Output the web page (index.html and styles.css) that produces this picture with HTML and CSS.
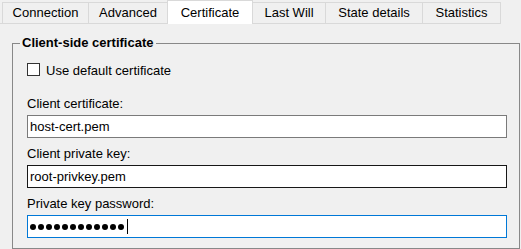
FILE: index.html
```html
<!DOCTYPE html>
<html lang="en">
<head>
    <meta charset="UTF-8">
    <title>Certificate settings</title>
    <link rel="stylesheet" href="styles.css">
</head>
<body>

    <div class="tabs">
        <div class="tab tab-connection">Connection</div>
        <div class="tab tab-advanced">Advanced</div>
        <div class="tab tab-certificate active">Certificate</div>
        <div class="tab tab-lastwill">Last Will</div>
        <div class="tab tab-state">State details</div>
        <div class="tab tab-stats">Statistics</div>
    </div>

    <fieldset class="group">
        <legend>Client-side certificate</legend>

        <label class="check">
            <span class="check-box"></span>
            <span>Use default certificate</span>
        </label>

        <div class="field">
            <div class="field-label">Client certificate:</div>
            <div class="input">host-cert.pem</div>
        </div>

        <div class="field">
            <div class="field-label">Client private key:</div>
            <div class="input hover">root-privkey.pem</div>
        </div>

        <div class="field">
            <div class="field-label">Private key password:</div>
            <div class="input focus">
                <span class="dot"></span><span class="dot"></span><span class="dot"></span><span class="dot"></span><span class="dot"></span><span class="dot"></span><span class="dot"></span><span class="dot"></span><span class="dot"></span><span class="dot"></span><span class="dot"></span><span class="dot"></span><span class="caret"></span>
            </div>
        </div>
    </fieldset>

</body>
</html>
```

FILE: styles.css
```css
body, html {
    margin: 0;
    padding: 0;
    height: 100%;
    width: 100%;
    font-family: "Liberation Sans", Arial, sans-serif;
    font-size: 13px;
    background-color: #f0f0f0;
    color: #000;
    overflow: hidden;
}
.tabs {
    display: flex;
    align-items: flex-start;
    width: max-content;
    height: 24px;
    box-sizing: border-box;
    padding-left: 2px;
    border-bottom: 1px solid #d9d9d9;
}
.tab {
    margin-top: 2px;
    margin-left: -1px;
    height: 21px;
    box-sizing: border-box;
    line-height: 20px;
    text-align: center;
    background-color: #f0f0f0;
    border: 1px solid #d9d9d9;
    border-bottom: none;
}
.tab:first-child {
    margin-left: 0;
}
.tab.active {
    margin-top: 0;
    height: 24px;
    padding-top: 1px;
    line-height: 21px;
    background-color: #fff;
    position: relative;
}
.tab-connection { width: 87px; }
.tab-advanced { width: 80px; }
.tab-certificate { width: 86px; }
.tab-lastwill { width: 74px; }
.tab-state { width: 98px; }
.tab-stats { width: 79px; }

.group {
    margin: 12px 1px 0 12px;
    padding: 0 12px 10px 14px;
    border: 1px solid #888;
    min-width: 0;
}
.group legend {
    margin-left: -7px;
    padding: 0 2px;
    font-weight: bold;
    line-height: 14px;
}
.check {
    display: flex;
    align-items: flex-start;
    gap: 6px;
    margin-top: 13px;
    line-height: 15px;
}
.check-box {
    width: 13px;
    height: 13px;
    box-sizing: border-box;
    border: 1px solid #333;
    background-color: #fff;
}
.field {
    margin-top: 8px;
}
.check + .field {
    margin-top: 18px;
}
.field-label {
    line-height: 15px;
    margin-bottom: 4px;
}
.input {
    display: flex;
    align-items: center;
    height: 23px;
    box-sizing: border-box;
    padding: 0 2px;
    line-height: 21px;
    background-color: #fff;
    border: 1px solid #7a7a7a;
    white-space: nowrap;
}
.input.hover {
    border-color: #171717;
}
.input.focus {
    border-color: #0078d7;
}
.dot {
    width: 6px;
    height: 6px;
    margin-right: 2px;
    border-radius: 50%;
    background-color: #000;
}
.caret {
    width: 1px;
    height: 15px;
    margin-left: 1px;
    background-color: #000;
}
```
